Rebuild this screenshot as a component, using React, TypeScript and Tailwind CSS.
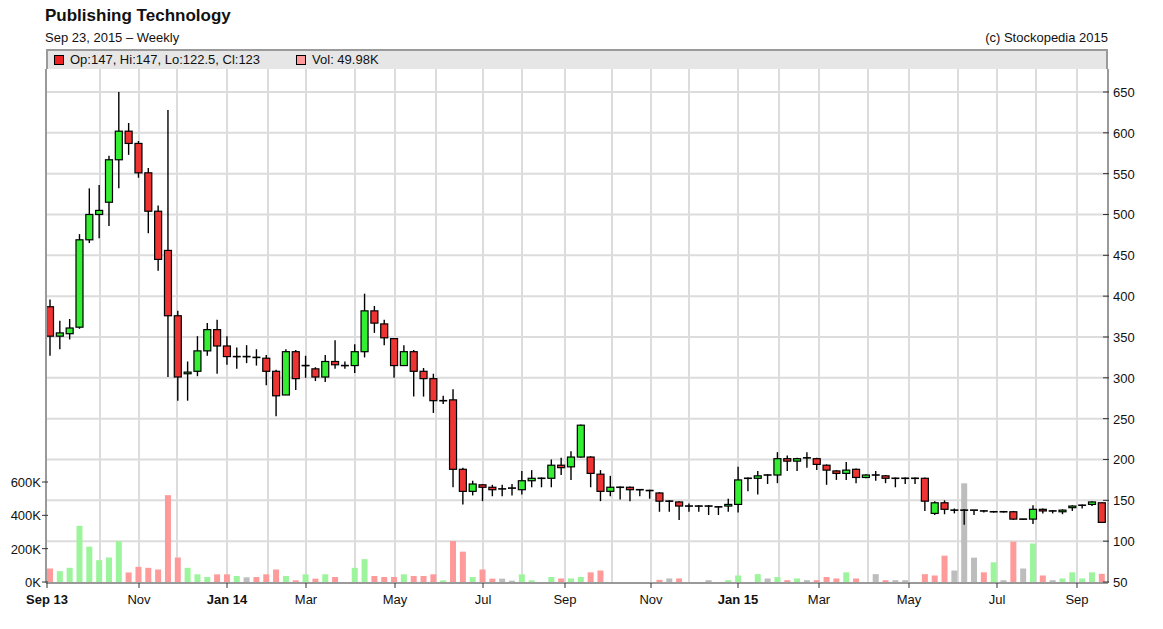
import React from 'react'

// o,c,h,l per week
const candles: number[][] = [
  [387,351,396,327],[351,355,370,335],[354,361,372,347],[362,469,476,360],[469,500,532,465],
  [500,505,536,471],[515,567,572,486],[567,602,650,532],[602,587,612,573],[587,551,590,545],
  [551,504,557,477],[504,445,511,431],[456,376,628,301],[376,301,382,272],[305,307,320,272],
  [308,333,351,302],[333,359,367,327],[359,339,371,305],[339,326,351,316],[326,325,337,311],
  [325,326,340,318],[325,324,335,315],[324,308,328,291],[308,278,310,253],[279,332,335,279],
  [332,299,334,285],[315,315,327,300],[311,301,313,296],[301,320,328,295],[320,316,346,311],
  [314,315,320,311],[315,332,341,306],[332,382,403,325],[382,367,388,355],[366,349,371,340],
  [348,315,348,300],[315,332,340,315],[332,308,334,277],[308,299,312,277],[299,272,305,257],
  [272,271,278,268],[273,188,286,166],[188,161,190,145],[161,170,174,156],[169,166,170,149],
  [166,163,169,155],[164,164,169,155],[164,165,170,156],[163,174,186,157],[174,177,187,166],
  [177,177,178,166],[177,193,200,166],[193,190,202,181],[191,203,210,175],[203,242,243,202],
  [203,183,204,166],[182,161,187,149],[161,166,180,155],[166,166,167,151],[166,163,167,149],
  [163,163,164,155],[162,161,163,152],[159,149,160,136],[149,149,150,136],[148,143,149,126],
  [143,143,146,136],[143,142,144,136],[143,142,144,132],[142,142,143,132],[143,145,152,136],
  [145,175,191,135],[176,177,178,161],[177,180,186,157],[180,181,182,170],[181,201,209,171],
  [201,198,205,186],[198,201,202,186],[201,202,209,190],[201,194,202,187],[193,187,194,169],
  [186,183,187,175],[183,187,197,175],[188,178,189,171],[178,181,182,177],[181,181,186,174],
  [180,177,181,171],[177,177,178,166],[177,177,178,170],[177,176,178,170],[177,149,178,137],
  [134,147,149,132],[147,139,150,133],[138,138,140,134],[138,138,139,120],[138,137,138,132],
  [137,136,138,135],[136,136,137,135],[136,136,137,135],[136,127,137,126],[127,127,127,126],
  [127,139,144,121],[139,137,140,134],[137,137,138,134],[136,138,139,133],[141,143,144,137],
  [143,144,145,140],[145,148,149,143],[147,123,147,122.5],
]

const vols: [number, string][] = [
  [81,'r'],[65,'g'],[85,'g'],[337,'g'],[212,'g'],[131,'g'],[147,'g'],[246,'g'],[57,'r'],[91,'r'],
  [85,'r'],[75,'r'],[521,'r'],[147,'r'],[85,'g'],[46,'g'],[30,'g'],[46,'r'],[46,'r'],[36,'g'],
  [28,'n'],[30,'r'],[46,'r'],[75,'r'],[36,'g'],[10,'r'],[46,'g'],[20,'r'],[46,'g'],[30,'r'],
  [0,'n'],[85,'g'],[137,'g'],[36,'r'],[30,'r'],[30,'r'],[46,'g'],[36,'r'],[36,'r'],[46,'r'],
  [10,'g'],[246,'r'],[182,'r'],[30,'g'],[75,'r'],[20,'r'],[20,'n'],[8,'n'],[46,'g'],[10,'g'],
  [0,'n'],[30,'g'],[21,'r'],[21,'g'],[30,'g'],[58,'r'],[69,'r'],[0,'n'],[0,'n'],[0,'n'],
  [0,'n'],[0,'n'],[13,'r'],[21,'n'],[21,'r'],[0,'n'],[0,'n'],[11,'n'],[0,'n'],[11,'g'],
  [39,'g'],[0,'n'],[47,'g'],[21,'n'],[30,'g'],[11,'r'],[21,'g'],[11,'n'],[11,'r'],[30,'r'],
  [21,'r'],[58,'g'],[21,'r'],[0,'n'],[47,'n'],[11,'r'],[11,'n'],[11,'n'],[0,'n'],[47,'r'],
  [39,'r'],[158,'r'],[69,'n'],[592,'n'],[146,'n'],[58,'r'],[118,'g'],[11,'n'],[242,'r'],[81,'n'],
  [231,'g'],[39,'r'],[11,'n'],[21,'g'],[58,'g'],[21,'g'],[58,'g'],[49,'r'],
]

const py = (p: number) => 584 - (p - 50) * 0.8167
const vy = (k: number) => 584 - k / 6
const cx = (i: number) => 50 + i * 9.83

const vGrid = [100,139,177,227,268,306,355,395,436,483,522,565,612,651,689,738,779,819,868,909,958,997,1036,1077]
const xLabels: [number, string, boolean][] = [
  [47,'Sep 13',true],[139,'Nov',false],[227,'Jan 14',true],[306,'Mar',false],[395,'May',false],
  [483,'Jul',false],[565,'Sep',false],[651,'Nov',false],[738,'Jan 15',true],[819,'Mar',false],
  [909,'May',false],[997,'Jul',false],[1077,'Sep',false],
]
const prices = [50,100,150,200,250,300,350,400,450,500,550,600,650]
const volLabels = [0,200,400,600]
const volColor: Record<string, string> = { r: '#ff9a9a', g: '#9cf59c', n: '#bdbdbd' }

function Chart() {
  return (
    <svg width={1163} height={558} viewBox="0 71 1163 558" className="block" style={{ fontFamily: '"Liberation Sans", Arial, sans-serif' }}>
      {prices.slice(1).map(p => (
        <line key={p} x1={46} x2={1108} y1={py(p)} y2={py(p)} stroke="#dcdcdc" strokeWidth={2} />
      ))}
      {vGrid.map(x => (
        <line key={x} x1={x} x2={x} y1={71} y2={584} stroke="#dcdcdc" strokeWidth={2} />
      ))}
      {vols.map(([v, c], i) =>
        v > 0 ? <rect key={i} x={cx(i) - 3} y={vy(v)} width={6} height={584 - vy(v)} fill={volColor[c]} /> : null
      )}
      {candles.map(([o, c, h, l], i) => {
        const x = cx(i)
        const top = py(Math.max(o, c))
        const bot = py(Math.min(o, c))
        const flat = bot - top < 1.5
        return (
          <g key={i}>
            <line x1={x} x2={x} y1={py(h)} y2={py(l)} stroke="#000" strokeWidth={1.4} />
            {flat ? (
              <line x1={x - 4} x2={x + 4} y1={top} y2={top} stroke="#000" strokeWidth={1.6} />
            ) : (
              <rect x={x - 3.5} y={top} width={7} height={bot - top} fill={c > o ? '#33ee33' : '#ee3333'} stroke="#000" strokeWidth={1.2} />
            )}
          </g>
        )
      })}
      <line x1={46} x2={46} y1={71} y2={585} stroke="#9a9a9a" strokeWidth={2} />
      <line x1={1108} x2={1108} y1={71} y2={585} stroke="#9a9a9a" strokeWidth={2} />
      <line x1={46} x2={1108} y1={585} y2={585} stroke="#9a9a9a" strokeWidth={2} />
      {prices.map(p => (
        <g key={p}>
          <line x1={1103} x2={1109} y1={py(p)} y2={py(p)} stroke="#333" />
          <text x={1113} y={py(p) + 5} fontSize={13} fill="#111">{p}</text>
        </g>
      ))}
      {volLabels.map(v => (
        <g key={v}>
          <line x1={42} x2={48} y1={vy(v)} y2={vy(v)} stroke="#333" />
          <text x={41} y={vy(v) + 5} fontSize={13} fill="#111" textAnchor="end">{v}K</text>
        </g>
      ))}
      {xLabels.map(([x, t, b]) => (
        <g key={t + x}>
          <line x1={x} x2={x} y1={585} y2={590} stroke="#333" />
          <text x={x} y={606} fontSize={13} fill="#111" textAnchor="middle" fontWeight={b ? 700 : 400}>{t}</text>
        </g>
      ))}
    </svg>
  )
}

export default function App() {
  return (
    <div className="w-[1163px] h-[629px] bg-white overflow-hidden text-[#111]" style={{ fontFamily: '"Liberation Sans", Arial, sans-serif' }}>
      <div className="pl-[45px] pr-[55px] pt-[5px]">
        <div className="text-[17px] font-bold leading-[22px]">Publishing Technology</div>
        <div className="flex justify-between text-[13px] leading-[16px] mt-[3px]">
          <span>Sep 23, 2015 – Weekly</span>
          <span>(c) Stockopedia 2015</span>
        </div>
      </div>
      <div className="ml-[46px] mt-[3px] w-[1062px] h-[20px] bg-[#e6e6e6] border-t-2 border-x-2 border-[#9a9a9a] flex items-center gap-[6px] pl-[6px] text-[13px]">
        <span className="w-[10px] h-[10px] bg-[#ee2222] border border-black" />
        <span>Op:147, Hi:147, Lo:122.5, Cl:123</span>
        <span className="w-[10px] h-[10px] bg-[#ff9a9a] border border-black ml-[30px]" />
        <span>Vol: 49.98K</span>
      </div>
      <Chart />
    </div>
  )
}
